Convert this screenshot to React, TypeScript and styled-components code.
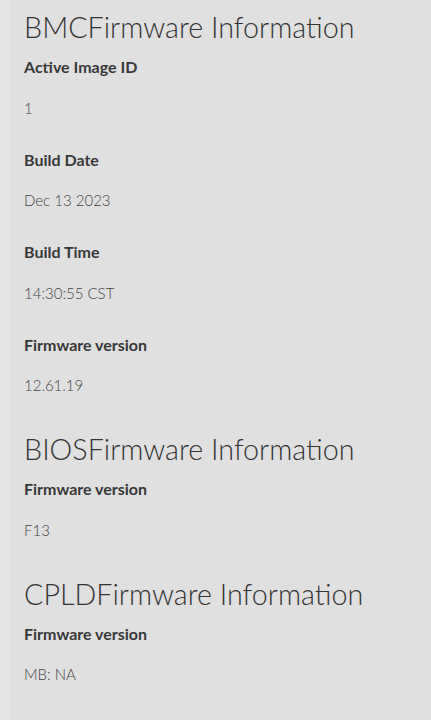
import React from 'react';
import styled, { createGlobalStyle } from 'styled-components';

const GlobalStyle = createGlobalStyle`
  html, body {
    margin: 0;
    padding: 0;
    background-color: #e0e0e0;
  }
  body {
    font-family: Lato, "Open Sans", "Liberation Sans", sans-serif;
  }
`;

const Page = styled.div`
  display: flex;
  min-height: 720px;
  background-color: #e0e0e0;
`;

const SideStrip = styled.div`
  width: 10px;
  flex-shrink: 0;
  background-color: #e5e5e5;
`;

const Content = styled.div`
  flex: 1;
  padding: 9px 0 0 14px;
`;

const Section = styled.section`
  margin-bottom: 36px;
`;

const Title = styled.h1`
  margin: 0 0 12px;
  font-size: 28.7px;
  line-height: 36px;
  font-weight: 300;
  color: #333;
`;

const Field = styled.div`
  margin-bottom: 32px;

  &:last-child {
    margin-bottom: 0;
  }
`;

const Label = styled.div`
  font-size: 16px;
  line-height: 20px;
  font-weight: 700;
  color: #383838;
  margin-bottom: 20.5px;
`;

const Value = styled.div`
  font-size: 15px;
  line-height: 20px;
  font-weight: 300;
  color: #444;
`;

type Info = { title: string; fields: [string, string][] };

const sections: Info[] = [
  {
    title: 'BMCFirmware Information',
    fields: [
      ['Active Image ID', '1'],
      ['Build Date', 'Dec 13 2023'],
      ['Build Time', '14:30:55 CST'],
      ['Firmware version', '12.61.19'],
    ],
  },
  { title: 'BIOSFirmware Information', fields: [['Firmware version', 'F13']] },
  { title: 'CPLDFirmware Information', fields: [['Firmware version', 'MB: NA']] },
];

export default function App() {
  return (
    <Page>
      <GlobalStyle />
      <SideStrip />
      <Content>
        {sections.map((s) => (
          <Section key={s.title}>
            <Title>{s.title}</Title>
            {s.fields.map(([label, value]) => (
              <Field key={label}>
                <Label>{label}</Label>
                <Value>{value}</Value>
              </Field>
            ))}
          </Section>
        ))}
      </Content>
    </Page>
  );
}
